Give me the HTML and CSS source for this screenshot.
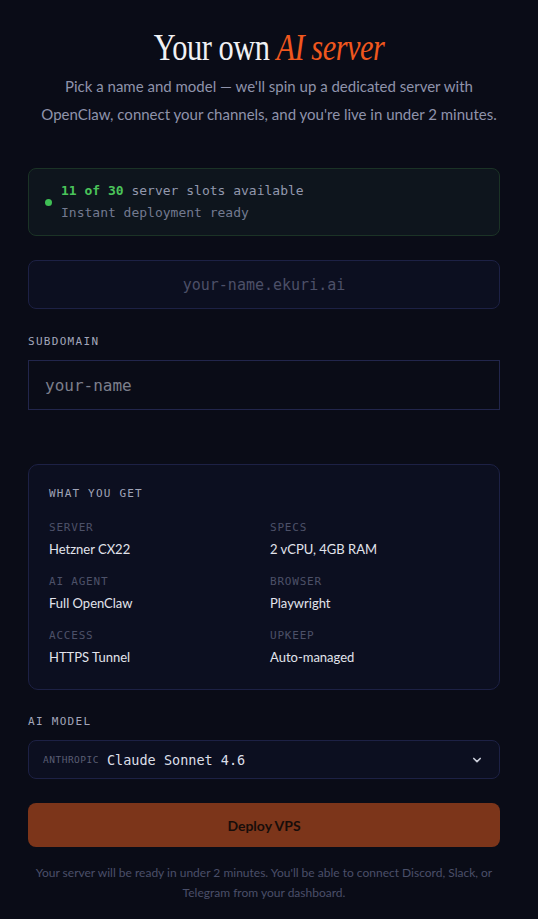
FILE: index.html
```html
<!DOCTYPE html>
<html lang="en">
<head>
<meta charset="utf-8">
<title>Your own AI server</title>
<link rel="stylesheet" href="styles.css">
</head>
<body>
<main class="page">
  <h1 class="title"><span class="title-inner">Your own <em>AI server</em></span></h1>
  <p class="lead">Pick a name and model — we'll spin up a dedicated server with OpenClaw, connect your channels, and you're live in under 2 minutes.</p>

  <div class="status">
    <span class="dot"></span>
    <div class="status-text">
      <div class="status-main"><strong>11 of 30</strong> server slots available</div>
      <div class="status-sub">Instant deployment ready</div>
    </div>
  </div>

  <div class="preview">your-name.ekuri.ai</div>

  <label class="label" for="sub">SUBDOMAIN</label>
  <input id="sub" class="input" type="text" placeholder="your-name">

  <section class="card">
    <h2 class="card-title">WHAT YOU GET</h2>
    <div class="grid">
      <div class="item"><div class="k">SERVER</div><div class="v">Hetzner CX22</div></div>
      <div class="item"><div class="k">SPECS</div><div class="v">2 vCPU, 4GB RAM</div></div>
      <div class="item"><div class="k">AI AGENT</div><div class="v">Full OpenClaw</div></div>
      <div class="item"><div class="k">BROWSER</div><div class="v">Playwright</div></div>
      <div class="item"><div class="k">ACCESS</div><div class="v">HTTPS Tunnel</div></div>
      <div class="item"><div class="k">UPKEEP</div><div class="v">Auto-managed</div></div>
    </div>
  </section>

  <div class="label label-model">AI MODEL</div>
  <div class="select">
    <span class="vendor">ANTHROPIC</span>
    <span class="model">Claude Sonnet 4.6</span>
    <svg class="chev" width="12" height="12" viewBox="0 0 12 12"><path d="M2.8 4.5 L6 7.6 L9.2 4.5" fill="none" stroke="#c9ccd8" stroke-width="1.7" stroke-linecap="round" stroke-linejoin="round"/></svg>
  </div>

  <button class="deploy" type="button">Deploy VPS</button>

  <p class="foot">Your server will be ready in under 2 minutes. You'll be able to connect Discord, Slack, or Telegram from your dashboard.</p>
</main>
</body>
</html>
```

FILE: styles.css
```css
* { box-sizing: border-box; }
html, body { margin: 0; padding: 0; background: #0a0c17; }
body { font-family: "Lato", "Noto Sans", sans-serif; color: #dfe1ea; }

.page {
  width: 538px;
  padding: 26px 38px 0 28px;
  display: flex;
  flex-direction: column;
}

.title {
  margin: 0;
  text-align: center;
  font-family: "Liberation Serif", "DejaVu Serif", serif;
  font-weight: 400;
  font-size: 38px;
  line-height: 42px;
  letter-spacing: -0.6px;
  color: #f1f1f4;
  margin-left: 10px;
}
.title-inner { display: inline-block; transform: scaleX(0.8); }
.title em { color: #f0571e; font-style: italic; }

.lead {
  margin: 4px -16px 0 -6px;
  padding: 0 14px;
  text-align: center;
  font-size: 15px;
  line-height: 28px;
  color: #8f93ab;
}

.status {
  margin-top: 40px;
  height: 68px;
  border: 1px solid #1b3326;
  background: #0e151d;
  border-radius: 8px;
  display: flex;
  align-items: center;
  padding-left: 16px;
  gap: 9px;
}
.dot { width: 7px; height: 7px; border-radius: 50%; background: #3fbf55; }
.status-text { font-family: "DejaVu Sans Mono", "Liberation Mono", monospace; font-size: 13px; line-height: 22px; color: #9298ad; }
.status-main strong { color: #4ac35a; font-weight: 700; }
.status-sub { color: #737a90; }

.preview {
  margin-top: 24px;
  height: 49px;
  border: 1px solid #1d2145;
  background: #0c0f20;
  border-radius: 8px;
  display: flex;
  align-items: center;
  justify-content: center;
  font-family: "DejaVu Sans Mono", "Liberation Mono", monospace;
  font-size: 15px;
  color: #4c5068;
}

.label {
  display: block;
  margin-top: 26px;
  font-family: "DejaVu Sans Mono", "Liberation Mono", monospace;
  font-size: 11px;
  letter-spacing: 1.3px;
  color: #a2a6ba;
  line-height: 14px;
}

.input {
  margin-top: 11px;
  height: 50px;
  width: 100%;
  border: 1px solid #22264c;
  background: #0a0c17;
  border-radius: 0;
  padding: 0 16px;
  font-family: "DejaVu Sans Mono", "Liberation Mono", monospace;
  font-size: 16px;
  color: #dfe1ea;
  outline: none;
}
.input::placeholder { color: #7c7f8c; }

.card {
  margin-top: 54px;
  border: 1px solid #1d2145;
  background: #0c0f20;
  border-radius: 10px;
  padding: 22px 20px 21px 20px;
  height: 226px;
}
.card-title {
  margin: 0;
  font-family: "DejaVu Sans Mono", "Liberation Mono", monospace;
  font-weight: 400;
  font-size: 11px;
  letter-spacing: 1.2px;
  color: #a0a4b8;
  line-height: 14px;
}
.grid {
  margin-top: 20px;
  display: grid;
  grid-template-columns: 221px 1fr;
  row-gap: 17px;
}
.k {
  font-family: "DejaVu Sans Mono", "Liberation Mono", monospace;
  font-size: 11px;
  letter-spacing: 0.8px;
  color: #4d5168;
  line-height: 14px;
}
.v { margin-top: 5px; font-size: 13px; line-height: 18px; color: #e2e4ec; }

.label-model { margin-top: 25px; }

.select {
  margin-top: 11px;
  height: 39px;
  border: 1px solid #1d2145;
  background: #0c0f20;
  border-radius: 8px;
  display: flex;
  align-items: center;
  padding: 0 14px;
}
.vendor {
  font-family: "DejaVu Sans Mono", "Liberation Mono", monospace;
  font-size: 9.5px;
  letter-spacing: 0.5px;
  color: #5a5e74;
}
.model {
  margin-left: 8px;
  font-family: "DejaVu Sans Mono", "Liberation Mono", monospace;
  font-size: 13.5px;
  color: #dcdfe8;
}
.chev { margin-left: auto; margin-right: 2px; }

.deploy {
  margin-top: 24px;
  height: 44px;
  width: 100%;
  border: 0;
  border-radius: 8px;
  background: #7c351a;
  color: #170d0a;
  font-family: "Lato", "Noto Sans", sans-serif;
  font-weight: 700;
  font-size: 14px;
}

.foot {
  margin: 16px -10px 0 -10px;
  text-align: center;
  font-size: 12px;
  line-height: 20px;
  color: #4a4f69;
}
```
